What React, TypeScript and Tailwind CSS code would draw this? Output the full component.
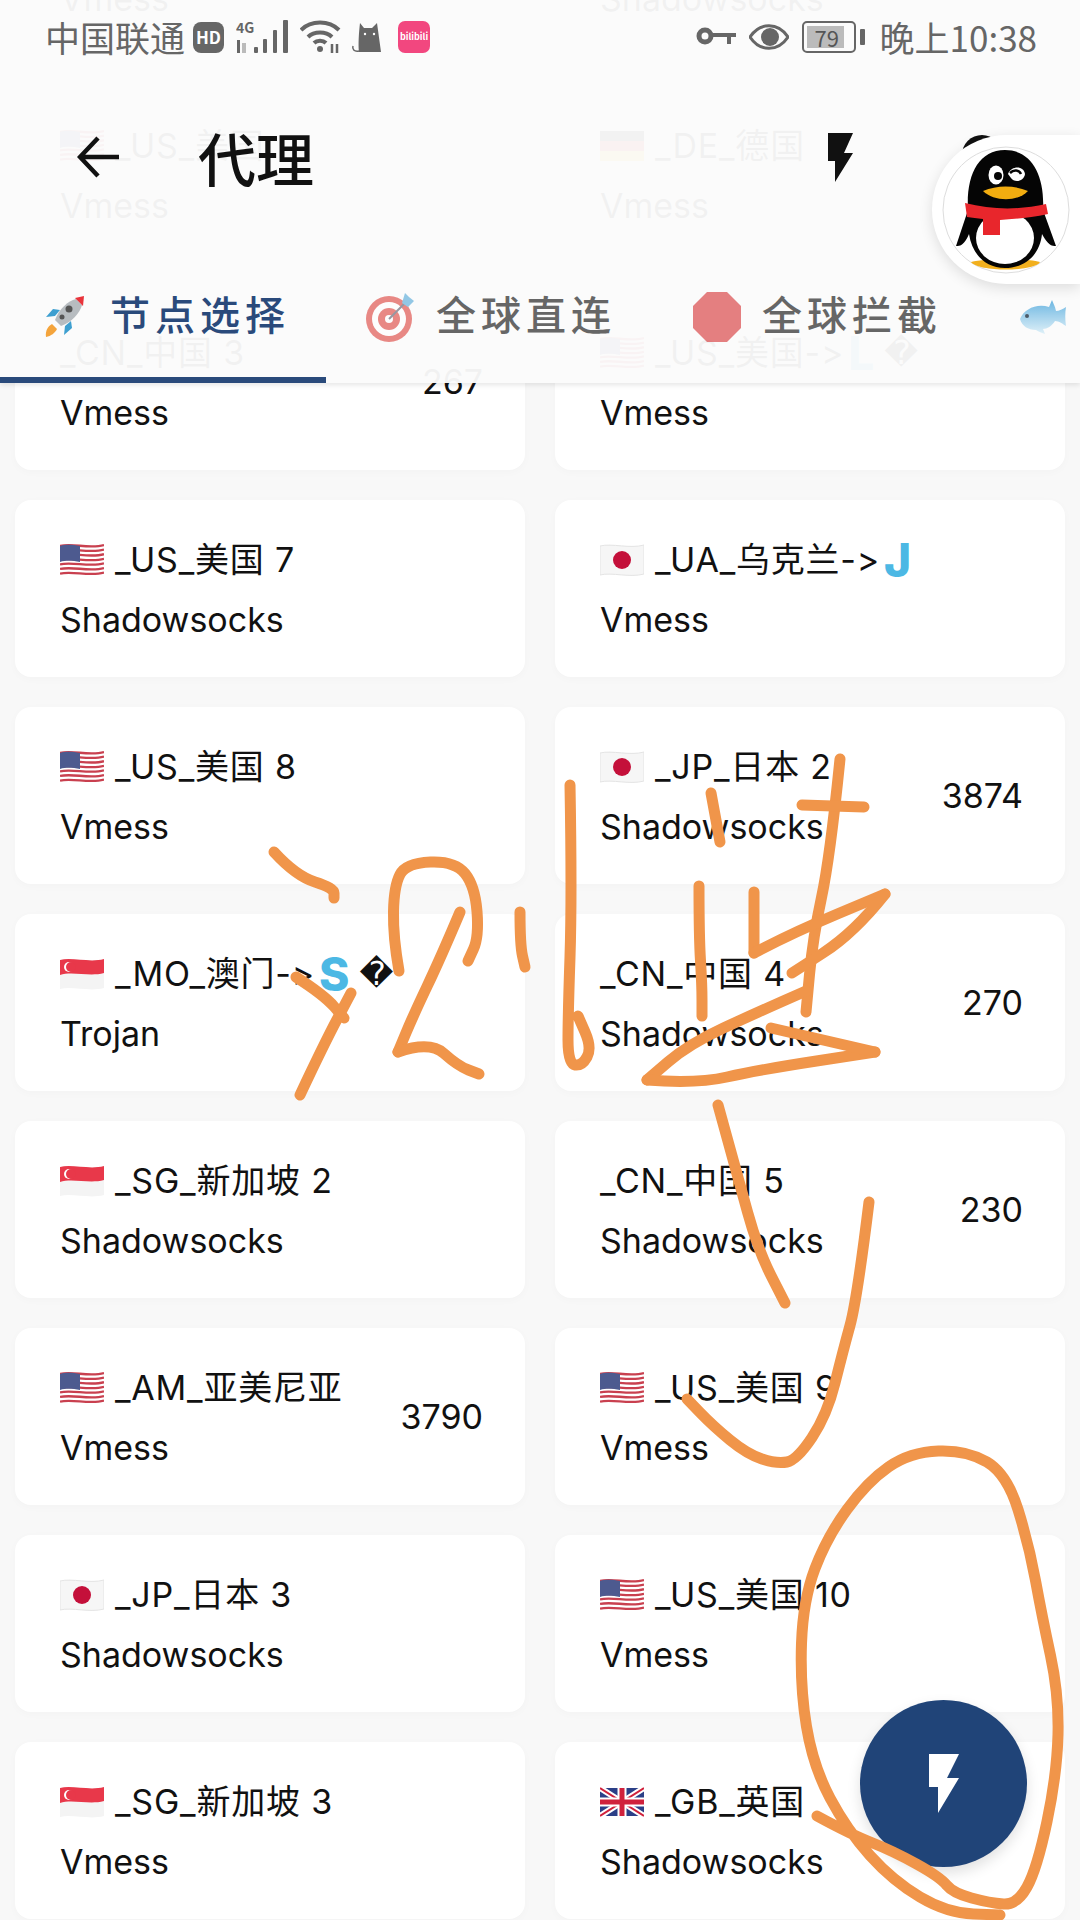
type Flag = "us" | "jp" | "sg" | "de" | "gb" | "";

type Node = {
  flag: Flag;
  name: string;
  type: string;
  ping?: string;
  blue?: string;
  bad?: boolean;
};

const rows: Node[] = [
  { flag: "us", name: "_US_美国 6", type: "Vmess" },
  { flag: "us", name: "_US_美国 5", type: "Shadowsocks" },
  { flag: "us", name: "_US_美国", type: "Vmess" },
  { flag: "de", name: "_DE_德国", type: "Vmess" },
  { flag: "", name: "_CN_中国 3", type: "Vmess", ping: "267" },
  { flag: "us", name: "_US_美国->", type: "Vmess", blue: "L", bad: true },
  { flag: "us", name: "_US_美国 7", type: "Shadowsocks" },
  { flag: "jp", name: "_UA_乌克兰->", type: "Vmess", blue: "J" },
  { flag: "us", name: "_US_美国 8", type: "Vmess" },
  { flag: "jp", name: "_JP_日本 2", type: "Shadowsocks", ping: "3874" },
  { flag: "sg", name: "_MO_澳门->", type: "Trojan", blue: "S", bad: true },
  { flag: "", name: "_CN_中国 4", type: "Shadowsocks", ping: "270" },
  { flag: "sg", name: "_SG_新加坡 2", type: "Shadowsocks" },
  { flag: "", name: "_CN_中国 5", type: "Shadowsocks", ping: "230" },
  { flag: "us", name: "_AM_亚美尼亚", type: "Vmess", ping: "3790" },
  { flag: "us", name: "_US_美国 9", type: "Vmess" },
  { flag: "jp", name: "_JP_日本 3", type: "Shadowsocks" },
  { flag: "us", name: "_US_美国 10", type: "Vmess" },
  { flag: "sg", name: "_SG_新加坡 3", type: "Vmess" },
  { flag: "gb", name: "_GB_英国", type: "Shadowsocks" },
];

function FlagIcon({ flag }: { flag: Flag }) {
  if (flag === "us") {
    return (
      <svg viewBox="0 0 44 34" className="w-[44px] h-[34px] shrink-0">
        <path d="M0 3C12 0 30 6 44 2V31C30 35 12 29 0 32Z" fill="#fff" />
        {[0, 1, 2, 3, 4, 5, 6].map((i) => (
          <path key={i} d={`M0 ${3 + i * 4.6}C12 ${i * 4.6} 30 ${6 + i * 4.6} 44 ${2 + i * 4.6}`} fill="none" stroke="#c9404f" strokeWidth="2.3" />
        ))}
        <path d="M0 3C7 1 13 2 20 3V19C13 18 7 17 0 19Z" fill="#4d5a8f" />
      </svg>
    );
  }
  if (flag === "jp") {
    return (
      <svg viewBox="0 0 44 34" className="w-[44px] h-[34px] shrink-0">
        <path d="M0 3C12 0 30 6 44 2V31C30 35 12 29 0 32Z" fill="#f6f6f6" stroke="#e4e4e4" />
        <circle cx="22" cy="17" r="9" fill="#c4103a" />
      </svg>
    );
  }
  if (flag === "sg") {
    return (
      <svg viewBox="0 0 44 34" className="w-[44px] h-[34px] shrink-0">
        <path d="M0 3C12 0 30 6 44 2V31C30 35 12 29 0 32Z" fill="#f4f4f4" />
        <path d="M0 3C12 0 30 6 44 2V16C30 20 12 14 0 18Z" fill="#e8384a" />
        <circle cx="9" cy="10" r="5" fill="#fff" />
        <circle cx="11" cy="10" r="5" fill="#e8384a" />
      </svg>
    );
  }
  if (flag === "de") {
    return (
      <svg viewBox="0 0 44 34" className="w-[44px] h-[34px] shrink-0">
        <rect y="2" width="44" height="10" fill="#222" />
        <rect y="12" width="44" height="10" fill="#d5242c" />
        <rect y="22" width="44" height="10" fill="#f7c92d" />
      </svg>
    );
  }
  if (flag === "gb") {
    return (
      <svg viewBox="0 0 44 34" className="w-[44px] h-[34px] shrink-0">
        <rect y="3" width="44" height="28" fill="#2b3f87" />
        <path d="M0 3L44 31M44 3L0 31" stroke="#fff" strokeWidth="6" />
        <path d="M0 3L44 31M44 3L0 31" stroke="#d0213c" strokeWidth="2" />
        <path d="M22 3V31M0 17H44" stroke="#fff" strokeWidth="9" />
        <path d="M22 3V31M0 17H44" stroke="#d0213c" strokeWidth="5" />
      </svg>
    );
  }
  return null;
}

function NodeCard({ node }: { node: Node }) {
  return (
    <div className="h-[177px] rounded-[16px] bg-white shadow-[0_2px_10px_rgba(0,0,0,0.025)] pl-[45px] pr-[42px] flex items-center justify-between text-[34px] text-[#111] [font-feature-settings:'calt'_0]">
      <div className="min-w-0 pt-[2px]">
        <div className="h-[60px] flex items-center whitespace-nowrap">
          {node.flag && (
            <span className="mr-[11px]">
              <FlagIcon flag={node.flag} />
            </span>
          )}
          <span className="tracking-[0.8px]">{node.name}</span>
          {node.blue && (
            <span className="font-extrabold text-[46px] leading-none text-[#4cb8e4] ml-[4px]">{node.blue}</span>
          )}
          {node.bad && (
            <span className="font-['DejaVu_Sans',sans-serif] text-[33px] ml-[10px]">{"\uFFFD"}</span>
          )}
        </div>
        <div className="h-[60px] flex items-center">{node.type}</div>
      </div>
      {node.ping && <div>{node.ping}</div>}
    </div>
  );
}

function StatusBar() {
  return (
    <div className="h-[74px] flex items-center justify-between pl-[45px] pr-[43px] text-[#666] text-[35px]">
      <div className="flex items-center">
        <span>中国联通</span>
        <span className="ml-[8px] w-[31px] h-[31px] rounded-[8px] bg-[#666] text-white text-[17px] font-bold flex items-center justify-center">
          HD
        </span>
        <svg viewBox="0 0 54 34" className="ml-[12px] w-[54px] h-[34px]" fill="#666">
          <text x="0" y="13" fontSize="14" fontWeight="700">4G</text>
          <rect x="1" y="20" width="3" height="13" />
          <rect x="6" y="23" width="4" height="10" fill="#bbb" />
          <rect x="18" y="27" width="4" height="6" rx="1" />
          <rect x="27" y="19" width="4" height="14" rx="1" />
          <rect x="37" y="10" width="4" height="23" rx="1" />
          <rect x="47" y="0" width="5" height="33" rx="1" />
        </svg>
        <svg viewBox="0 0 42 34" className="ml-[10px] w-[42px] h-[34px]" fill="none" stroke="#666" strokeWidth="4">
          <path d="M1 10C11 0 29 0 39 10" />
          <path d="M8 17C14 11 26 11 32 17" />
          <path d="M14 23C17 20 23 20 26 23" />
          <circle cx="20" cy="29" r="3" fill="#666" stroke="none" />
          <path d="M32 24V33M37 33V24" strokeWidth="2.5" />
        </svg>
        <svg viewBox="0 0 32 32" className="ml-[9px] w-[32px] h-[32px]" fill="#666">
          <path d="M9 2L13 7H21L26 2L30 31H8C7 24 8 10 9 2Z" />
          <path d="M8 30C3 31 1 28 2 25" fill="none" stroke="#666" strokeWidth="1.5" />
          <circle cx="14" cy="13" r="1.2" fill="#fff" />
          <circle cx="23" cy="13" r="1.2" fill="#fff" />
        </svg>
        <span className="ml-[15px] w-[32px] h-[32px] rounded-[7px] bg-[#f2477f] text-white text-[9px] font-bold flex items-center justify-center">
          bilibili
        </span>
      </div>
      <div className="flex items-center">
        <svg viewBox="0 0 40 20" className="w-[40px] h-[20px]" fill="none" stroke="#666">
          <circle cx="9" cy="9" r="6" strokeWidth="5" />
          <path d="M15 8H40M33 8V17" strokeWidth="4" />
        </svg>
        <svg viewBox="0 0 40 30" className="ml-[13px] w-[40px] h-[30px]">
          <path d="M1 15C11 0 29 0 39 15C29 30 11 30 1 15Z" fill="none" stroke="#666" strokeWidth="3" />
          <circle cx="21" cy="15" r="9" fill="#666" />
        </svg>
        <div className="ml-[13px] w-[54px] h-[32px] rounded-[5px] border-2 border-[#666] p-[3px] relative">
          <div className="h-full w-[37px] bg-[#bbb]" />
          <span className="absolute left-[11px] top-[1px] text-[22px] leading-[26px] text-[#555]">79</span>
        </div>
        <span className="ml-[4px] w-[5px] h-[16px] bg-[#666] rounded-[1px]" />
        <span className="ml-[15px]">晚上10:38</span>
      </div>
    </div>
  );
}

function Rocket() {
  return (
    <svg viewBox="0 0 44 44" className="w-[44px] h-[44px]">
      <path d="M4 42C3 36 6 31 10 29L15 34C13 38 9 41 4 42Z" fill="#f4a43c" />
      <path d="M13 21L4 22L11 14L18 15Z" fill="#3d9fd0" />
      <path d="M23 31L22 40L30 33L29 26Z" fill="#3d9fd0" />
      <path d="M13 25C17 14 26 6 34 4L40 10C38 18 30 27 19 31Z" fill="#b7bcc0" />
      <path d="M33 3L42 1L41 11Z" fill="#e8333a" />
      <circle cx="27" cy="14" r="3.5" fill="#555" />
      <circle cx="20" cy="22" r="2.5" fill="#555" />
    </svg>
  );
}

function Target() {
  return (
    <svg viewBox="0 0 50 50" className="w-[50px] h-[50px] opacity-60">
      <circle cx="24" cy="27" r="23" fill="#dc3c36" />
      <circle cx="24" cy="27" r="17" fill="#fff" />
      <circle cx="24" cy="27" r="11" fill="#dc3c36" />
      <circle cx="24" cy="27" r="4" fill="#fff" />
      <path d="M24 27L40 11" stroke="#556" strokeWidth="2" />
      <path d="M37 11L40 1L44 5L49 9L43 15Z" fill="#4da6d8" />
    </svg>
  );
}

function Stop() {
  return (
    <svg viewBox="0 0 48 50" className="w-[50px] h-[50px] opacity-60">
      <path d="M14 0H34L48 14V36L34 50H14L0 36V14Z" fill="#d52d30" />
    </svg>
  );
}

function Fish() {
  return (
    <svg viewBox="0 0 48 36" className="w-[48px] h-[36px] opacity-80 shrink-0">
      <defs>
        <linearGradient id="fishBody" x1="0" y1="0" x2="0" y2="1">
          <stop offset="0" stopColor="#4aa6dc" />
          <stop offset="1" stopColor="#d8eef8" />
        </linearGradient>
      </defs>
      <path d="M1 20C5 10 18 4 30 8L33 1C34 4 36 7 37 12C40 12 44 10 47 8C46 14 46 20 47 27C44 25 40 22 36 22C33 27 28 30 24 30L26 35C22 34 19 32 17 31C9 31 3 27 1 20Z" fill="url(#fishBody)" />
      <circle cx="8" cy="17" r="2" fill="#234" />
    </svg>
  );
}

function Header() {
  return (
    <div className="absolute top-0 left-0 right-0 h-[383px] bg-[#fbfbfb]/96 shadow-[0_2px_5px_rgba(0,0,0,0.1)] font-['Noto_Sans_CJK_SC',sans-serif]">
      <StatusBar />
      <div className="h-[166px] flex items-center pl-[77px] pr-[78px]">
        <svg viewBox="0 0 42 42" className="w-[42px] h-[42px]" fill="none" stroke="#111" strokeWidth="4.5">
          <path d="M42 21H3M21 2L3 21L21 40" />
        </svg>
        <span className="ml-[79px] text-[58px] font-medium text-[#111]">代理</span>
        <svg viewBox="0 0 27 49" className="ml-auto w-[27px] h-[49px]" fill="#111">
          <path d="M1 0H26L17 20H26L8 49V28H1Z" />
        </svg>
        <span className="ml-[108px] w-[40px] h-[44px] rounded-full bg-[#111]" />
      </div>
      <div className="mt-[10px] h-[133px] flex overflow-hidden text-[40px] tracking-[5px] font-medium">
        <div className="relative w-[326px] shrink-0 flex items-center pl-[42px] text-[#2a4a7b]">
          <Rocket />
          <span className="ml-[24px] mb-[8px]">节点选择</span>
          <span className="absolute left-0 bottom-0 w-full h-[6px] bg-[#2a4a7b]" />
        </div>
        <div className="shrink-0 flex items-center pl-[39px] pr-[35px] text-[#666]">
          <Target />
          <span className="ml-[21px] mb-[8px]">全球直连</span>
        </div>
        <div className="shrink-0 flex items-center pl-[41px] pr-[37px] text-[#666]">
          <Stop />
          <span className="ml-[20px] mb-[8px]">全球拦截</span>
        </div>
        <div className="shrink-0 flex items-center pl-[40px]">
          <Fish />
        </div>
      </div>
    </div>
  );
}

function QqBubble() {
  return (
    <div className="absolute right-0 top-[135px] w-[148px] h-[149px] rounded-l-full bg-white shadow-[0_4px_14px_rgba(0,0,0,0.12)] flex items-center pl-[10px]">
      <svg viewBox="0 0 128 128" className="w-[128px] h-[128px]">
        <circle cx="64" cy="64" r="63" fill="#fff" stroke="#ddd" />
        <path d="M29 116C44 112 84 112 98 116C92 126 36 126 29 116Z" fill="#f2b01e" />
        <path d="M14 100L26 64C24 30 36 4 63 4C90 4 103 30 101 64L114 100C108 101 104 95 100 88C98 108 84 122 63 122C43 122 30 108 27 88C24 95 20 101 14 100Z" fill="#050505" />
        <ellipse cx="63" cy="92" rx="29" ry="26" fill="#fff" />
        <path d="M23 57C50 64 78 64 104 58L106 68C88 72 72 73 58 74V89H41V73C35 72 30 72 25 71Z" fill="#e8262c" />
        <path d="M41 45C55 39 72 39 86 45C76 56 52 56 41 45Z" fill="#f2ad10" />
        <ellipse cx="54" cy="29" rx="7.5" ry="9.5" fill="#fff" />
        <circle cx="56" cy="30" r="4" fill="#050505" />
        <path d="M66 28C70 19 82 20 83 28C82 36 72 37 69 32" fill="#fff" />
        <path d="M68 27C72 23 77 24 79 28" fill="none" stroke="#050505" strokeWidth="2.5" />
      </svg>
    </div>
  );
}

const strokes: number[][] = [
  [274, 852, 296, 876, 334, 888, 334, 898],
  [296, 977, 324, 995, 344, 1018],
  [300, 1095, 324, 1044, 351, 993],
  [399, 971, 393, 937, 394, 886, 406, 863, 455, 861, 475, 886, 479, 937, 468, 961],
  [460, 912, 441, 957, 413, 1016, 398, 1052],
  [398, 1052, 430, 1041, 458, 1066, 479, 1074],
  [520, 912, 520, 945, 525, 967],
  [570, 785, 572, 898, 568, 1016, 568, 1064, 582, 1066, 592, 1048, 578, 1016],
  [711, 793, 720, 842],
  [840, 759, 830, 858, 813, 937, 806, 1012],
  [802, 805, 864, 807],
  [699, 886, 699, 937, 702, 985, 702, 1016],
  [754, 892, 754, 953],
  [754, 953, 792, 933, 885, 894],
  [885, 894, 854, 933, 792, 973],
  [806, 991, 758, 1012, 689, 1044, 647, 1080],
  [647, 1080, 696, 1084, 758, 1070, 875, 1052],
  [875, 1052, 771, 1028],
  [718, 1105, 737, 1174, 758, 1250, 785, 1303],
  [869, 1202, 857, 1300, 843, 1351, 827, 1415, 797, 1460, 777, 1464, 747, 1454, 713, 1426, 687, 1399],
  [
    817, 1816, 850, 1834, 893, 1851, 940, 1877, 953, 1893, 990, 1903, 1017, 1905, 1037, 1869, 1057, 1774,
    1059, 1695, 1042, 1616, 1029, 1545, 1007, 1474, 967, 1450, 910, 1452, 867, 1482, 827, 1537, 803, 1600,
    800, 1687, 813, 1766, 847, 1830, 893, 1881, 947, 1913, 1000, 1915,
  ],
];

// smooth the hand drawn lines through the midpoints
function toPath(p: number[]) {
  let d = `M${p[0]} ${p[1]}`;
  for (let i = 2; i < p.length - 2; i += 2) {
    const mx = (p[i] + p[i + 2]) / 2;
    const my = (p[i + 1] + p[i + 3]) / 2;
    d += `Q${p[i]} ${p[i + 1]} ${mx} ${my}`;
  }
  return d + `L${p[p.length - 2]} ${p[p.length - 1]}`;
}

export default function App() {
  return (
    <div className="relative w-[1080px] h-[1920px] overflow-hidden bg-[#f8f8f8] font-['Inter','Noto_Sans_CJK_SC',sans-serif]">
      <div className="-mt-[121px] px-[15px] grid grid-cols-2 gap-x-[30px] gap-y-[30px]">
        {rows.map((node) => (
          <NodeCard key={node.name + node.type} node={node} />
        ))}
      </div>
      <Header />
      <QqBubble />
      <div className="absolute left-[860px] top-[1700px] w-[167px] h-[167px] rounded-full bg-[#204478] shadow-[0_6px_14px_rgba(0,0,0,0.12)] flex items-center justify-center">
        <svg viewBox="0 0 30 59" className="w-[30px] h-[59px]" fill="#fff">
          <path d="M0 0H30L18 24H30L9 59V33H0Z" />
        </svg>
      </div>
      <svg viewBox="0 0 1080 1920" className="absolute inset-0 w-[1080px] h-[1920px] pointer-events-none" fill="none" stroke="#f0954a" strokeWidth="11" strokeLinecap="round" strokeLinejoin="round">
        {strokes.map((s, i) => (
          <path key={i} d={toPath(s)} />
        ))}
      </svg>
    </div>
  );
}
